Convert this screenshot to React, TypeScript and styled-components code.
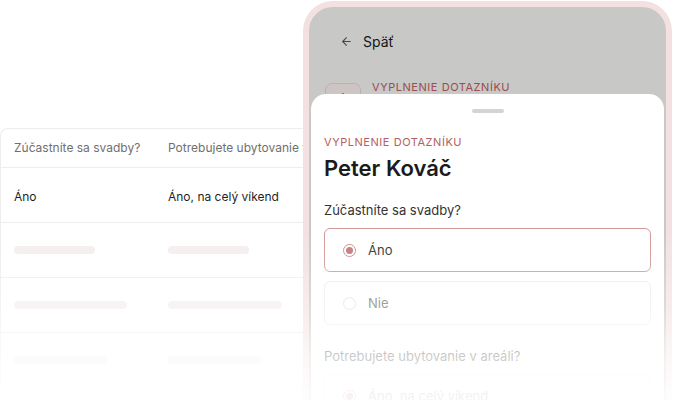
import styled, { createGlobalStyle } from "styled-components";

const GlobalStyle = createGlobalStyle`
  html, body {
    margin: 0;
    padding: 0;
    background: #ffffff;
  }
  body {
    font-family: Inter, "Noto Sans", sans-serif;
    color: #1c1c1c;
  }
`;

const Stage = styled.div`
  position: relative;
  width: 674px;
  height: 400px;
  overflow: hidden;
  background: #ffffff;
  padding-top: 128px;
  box-sizing: border-box;
`;

const TableCard = styled.div`
  width: 360px;
  border: 1px solid #ededed;
  border-right: none;
  border-bottom: none;
  border-top-left-radius: 8px;
  background: #ffffff;
`;

const Row = styled.div<{ $head?: boolean }>`
  display: grid;
  grid-template-columns: 154px 1fr;
  align-items: center;
  height: ${(p) => (p.$head ? "38px" : "54px")};
  border-bottom: 1px solid #eeeeee;
`;

const Cell = styled.div<{ $head?: boolean }>`
  padding-left: 13px;
  font-size: 12px;
  line-height: 18px;
  white-space: nowrap;
  overflow: hidden;
  color: ${(p) => (p.$head ? "#6f6f6f" : "#1f1f1f")};
  padding-top: ${(p) => (p.$head ? "0" : "4px")};
`;

const Skeleton = styled.div<{ $w: number }>`
  margin-left: 13px;
  width: ${(p) => p.$w}px;
  height: 8px;
  border-radius: 4px;
  background: #f4eeee;
`;

const Phone = styled.div`
  position: absolute;
  left: 303px;
  top: 1px;
  width: 369px;
  height: 440px;
  box-sizing: border-box;
  border: 6px solid #f3e1e1;
  border-radius: 30px;
  overflow: hidden;
  background: #c8c8c6;
`;

const Screen = styled.div`
  position: relative;
  height: 100%;
  padding: 25px 0 0 31px;
  box-sizing: border-box;
`;

const BackRow = styled.div`
  display: flex;
  align-items: center;
  gap: 10px;
  height: 18px;
  font-size: 14px;
  color: #161616;
`;

const BehindItem = styled.div`
  display: flex;
  align-items: flex-start;
  gap: 11px;
  margin: 33px 0 0 -15px;
`;

const IconBox = styled.div`
  width: 36px;
  height: 36px;
  box-sizing: border-box;
  border: 1px solid #b9b2b2;
  border-radius: 7px;
  background: #cdc4c4;
  display: flex;
  justify-content: center;
  padding-top: 9px;
`;

const IconTick = styled.div`
  width: 2px;
  height: 4px;
  background: #6e6262;
  border-radius: 1px;
`;

const Eyebrow = styled.div<{ $dim?: boolean }>`
  font-size: 11px;
  line-height: 14px;
  letter-spacing: 0.55px;
  text-transform: uppercase;
  color: ${(p) => (p.$dim ? "#9b4d4c" : "#b36060")};
  margin-top: ${(p) => (p.$dim ? "-3px" : "0")};
`;

const Sheet = styled.div`
  position: absolute;
  top: 87px;
  left: 2px;
  right: 2px;
  bottom: 0;
  background: #ffffff;
  border-radius: 15px 15px 0 0;
  padding: 15px 13px 0;
  display: flex;
  flex-direction: column;
`;

const Handle = styled.div`
  align-self: center;
  width: 32px;
  height: 4px;
  border-radius: 2px;
  background: #d4d4d4;
  margin-bottom: 22px;
`;

const Name = styled.div`
  margin-top: 5px;
  font-size: 22px;
  line-height: 28px;
  font-weight: 600;
  color: #1b1b1b;
`;

const Question = styled.div<{ $gap: number }>`
  margin-top: ${(p) => p.$gap}px;
  font-size: 13px;
  line-height: 20px;
  color: #333333;
  margin-bottom: 8px;
`;

const Option = styled.div<{ $active?: boolean }>`
  display: flex;
  align-items: center;
  gap: 12px;
  height: 44px;
  box-sizing: border-box;
  padding-left: 18px;
  border: 1px solid ${(p) => (p.$active ? "#d49696" : "#efeded")};
  border-radius: 6px;
  font-size: 13px;
  color: ${(p) => (p.$active ? "#2e2e2e" : "#707070")};
  & + & {
    margin-top: 9px;
  }
`;

const Radio = styled.div<{ $on?: boolean }>`
  width: 13px;
  height: 13px;
  box-sizing: border-box;
  border-radius: 50%;
  border: 1px solid ${(p) => (p.$on ? "#cc8585" : "#e2dfdf")};
  display: flex;
  align-items: center;
  justify-content: center;
  &::after {
    content: "";
    width: 7px;
    height: 7px;
    border-radius: 50%;
    background: ${(p) => (p.$on ? "#c27676" : "transparent")};
  }
`;

const Fade = styled.div`
  position: absolute;
  left: 0;
  right: 0;
  top: 230px;
  bottom: 0;
  pointer-events: none;
  background: linear-gradient(
    to bottom,
    rgba(255, 255, 255, 0) 0%,
    rgba(255, 255, 255, 0.35) 45%,
    rgba(255, 255, 255, 0.75) 75%,
    rgba(255, 255, 255, 0.92) 100%
  );
`;

const BackArrow = () => (
  <svg width="13" height="13" viewBox="0 0 24 24" fill="none" stroke="#4a4a4a" strokeWidth="2" strokeLinecap="round" strokeLinejoin="round">
    <path d="M19 12H5" />
    <path d="M12 19l-7-7 7-7" />
  </svg>
);

const rows = [
  [81, 81],
  [113, 114],
  [93, 93],
];

export default function App() {
  return (
    <>
      <GlobalStyle />
      <Stage>
        <TableCard>
          <Row $head>
            <Cell $head>Zúčastníte sa svadby?</Cell>
            <Cell $head>Potrebujete ubytovanie v areáli?</Cell>
          </Row>
          <Row>
            <Cell>Áno</Cell>
            <Cell>Áno, na celý víkend</Cell>
          </Row>
          {rows.map(([a, b], i) => (
            <Row key={i}>
              <Skeleton $w={a} />
              <Skeleton $w={b} />
            </Row>
          ))}
        </TableCard>

        <Phone>
          <Screen>
            <BackRow>
              <BackArrow />
              <span>Späť</span>
            </BackRow>
            <BehindItem>
              <IconBox>
                <IconTick />
              </IconBox>
              <Eyebrow $dim>Vyplnenie dotazníku</Eyebrow>
            </BehindItem>
            <Sheet>
              <Handle />
              <Eyebrow>Vyplnenie dotazníku</Eyebrow>
              <Name>Peter Kováč</Name>
              <Question $gap={18}>Zúčastníte sa svadby?</Question>
              <Option $active>
                <Radio $on />
                Áno
              </Option>
              <Option>
                <Radio />
                Nie
              </Option>
              <Question $gap={21}>Potrebujete ubytovanie v areáli?</Question>
              <Option>
                <Radio $on />
                Áno, na celý víkend
              </Option>
            </Sheet>
          </Screen>
        </Phone>
        <Fade />
      </Stage>
    </>
  );
}
